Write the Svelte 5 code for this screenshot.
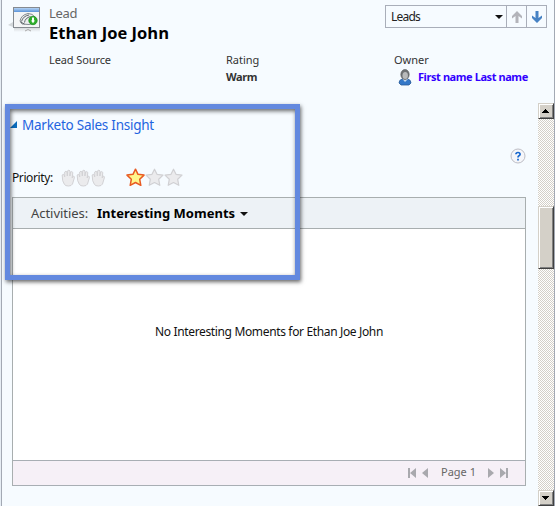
<script>
  const hands = [0, 1, 2];
  const stars = [true, false, false];
</script>

<div class="page">
  <header>
    <svg class="lead-icon" width="34" height="28" viewBox="0 0 34 28">
      <defs>
        <linearGradient id="bar" x2="0" y2="1"><stop stop-color="#b4d3f5" /><stop offset="1" stop-color="#5b93d8" /></linearGradient>
        <linearGradient id="reflection" x2="0" y2="1"><stop stop-color="#aaa" stop-opacity=".5" /><stop offset="1" stop-color="#aaa" stop-opacity="0" /></linearGradient>
      </defs>
      <path d="M0 20l5-3v5z" fill="#d3d7da" />
      <rect x="6" y="22" width="26" height="5" fill="url(#reflection)" />
      <rect x="5.5" y="2.500" width="26" height="20" fill="#f4f5f6" stroke="#858a90" />
      <rect x="6" y="3" width="25" height="4" fill="url(#bar)" />
      <path d="M12 16Q13 10 20 8.500Q24 8 28 13L27 18 21 19.500 14 19Z" fill="#eceeef" stroke="#858b90" />
      <path d="M13.500 16.500Q15 11 21 10M16.500 17.500Q17 13 22.500 11.500M12.500 17l4 2" fill="none" stroke="#62686d" stroke-width="1" />
      <path d="M17 26q3-3 6 0" fill="none" stroke="#aaa" />
      <circle cx="25" cy="15.500" r="4.200" fill="#2fae2b" stroke="#168b18" stroke-width=".7" />
      <path d="M24 12.500h2v3h1L25 18.300 23 15.500H24z" fill="#fff" />
    </svg>
    <div class="title">
      <div class="kind">Lead</div>
      <div class="name">Ethan Joe John</div>
    </div>
    <div class="nav">
      <div class="select"><span>Leads</span><i class="caret"></i></div>
      <div class="arrow"><svg width="10" height="12" viewBox="0 0 10 12"><path d="M5 0l5 5v2.500L6.500 5v7h-3V5L0 7.500V5z" fill="#b3b4ba" /></svg></div>
      <div class="arrow"><svg width="10" height="12" viewBox="0 0 10 12"><path d="M5 12L0 7V4.500L3.500 7V0h3v7L10 4.500V7z" fill="#4682c4" /></svg></div>
    </div>
  </header>

  <div class="fields">
    <div class="f1"><div class="lab src">Lead Source</div></div>
    <div class="f2"><div class="lab">Rating</div><div class="val">Warm</div></div>
    <div class="f3">
      <div class="lab">Owner</div>
      <div class="owner">
        <svg width="14" height="17" viewBox="0 0 14 17">
          <path d="M1 14q0-3 3-4h6q3 1 3 4l-2 2H3z" fill="#3478c8" stroke="#285b98" stroke-width=".8" />
          <path d="M4.500 10L7 13l3-3" fill="#c9dced" />
          <ellipse cx="7" cy="5.500" rx="4.200" ry="5" fill="#6f7274" stroke="#56595b" stroke-width=".6" />
          <ellipse cx="7.200" cy="6.500" rx="2.700" ry="3.500" fill="#b8babb" />
        </svg>
        <span>First name Last name</span>
      </div>
    </div>
  </div>

  <div class="lower">
    <main>
      <div class="section"><svg width="7" height="7" viewBox="0 0 7 7"><path d="M7 0v7H0z" fill="#0b6cbc" /></svg><span>Marketo Sales Insight</span></div>
      <div class="help">
        <svg width="16" height="16" viewBox="0 0 16 16"><circle cx="8" cy="8" r="7" fill="#f5f6fa" stroke="#bdbdc5" /><path d="M5.900 6.300Q6 4.500 8 4.500T10.100 6.200Q10.100 7.200 9 7.800Q8 8.400 8 9.500M8 10.700v1.700" fill="none" stroke="#1767ce" stroke-width="1.700" /></svg>
      </div>
      <div class="priority">
        <span>Priority:</span>
        <div class="hands">
          {#each hands as h (h)}
            <svg width="15" height="18" viewBox="0 0 15 18"><path d="M3.500 15.500Q1 12.500 1.200 6Q2.200 4.500 3.200 6L3.700 8 3.700 3Q5 1.500 6 3L6.300 7 6.700 1.700Q8 .5 9 2L8.900 7 9.600 3Q11 2 11.800 3.500L11.200 9 12.200 7Q13.700 7 13.300 9L11.500 15Q10.500 17 7.500 17T3.500 15.500Z" fill="#ebebed" stroke="#d2d2d5" /></svg>
          {/each}
        </div>
        <div class="stars">
          {#each stars as on, i (i)}
            <svg width="19" height="19" viewBox="0 0 19 19"><path d="M9.500 1.200L12 6.300 18 7.100 13.700 11.300 14.800 17.300 9.500 14.500 4.200 17.300 5.300 11.300 1 7.100 7 6.300Z" fill={on ? '#fff68c' : '#ebebed'} stroke={on ? '#e85a22' : '#d0d0d3'} stroke-width={on ? 1.500 : 1.200} stroke-linejoin="round" /></svg>
          {/each}
        </div>
      </div>
      <section class="panel">
        <div class="panel-head"><span class="act">Activities:</span><b>Interesting Moments</b><i class="caret"></i></div>
        <div class="panel-body"><span>No Interesting Moments for Ethan Joe John</span></div>
        <footer>
          <svg class="first" width="9" height="10" viewBox="0 0 9 10"><path d="M0 0h2v10H0zM8 0v10L2 5z" fill="#a9a9ae" /></svg>
          <svg class="prev" width="6" height="10" viewBox="0 0 6 10"><path d="M6 0v10L0 5z" fill="#a9a9ae" /></svg>
          <span>Page 1</span>
          <svg class="next" width="6" height="10" viewBox="0 0 6 10"><path d="M0 0v10l6-5z" fill="#a9a9ae" /></svg>
          <svg class="last" width="9" height="10" viewBox="0 0 9 10"><path d="M0 0v10l6-5zM6 0h2v10H6z" fill="#a9a9ae" /></svg>
        </footer>
      </section>
    </main>
    <div class="scroll">
      <div class="btn"><svg width="8" height="4" viewBox="0 0 8 4" shape-rendering="crispEdges"><path d="M3 0h1v1h1v1h1v1h1v1H0V3h1V2h1V1h1z" /></svg></div>
      <div class="thumb"></div>
      <div class="btn end"><svg width="8" height="4" viewBox="0 0 8 4" shape-rendering="crispEdges"><path d="M0 0h7v1H6v1H5v1H4v1H3V3H2V2H1V1H0z" /></svg></div>
    </div>
  </div>
  <div class="highlight"></div>
</div>

<style>
  :global(body) { background: #f6fbff; }
  * { box-sizing: border-box; }
  svg { display: block; flex: none; }
  .page { position: relative; width: 555px; height: 506px; overflow: hidden; background: #f6fbff; border-left: 1px solid #e6edf4; border-right: 1px solid #a3a9b4; box-shadow: inset 1px 0 #a3a9b4; font: 12px/16px "Noto Sans", "Open Sans", sans-serif; color: #333; white-space: nowrap; display: flex; flex-direction: column; }
  header { height: 51px; display: flex; flex: none; }
  .lead-icon { margin: 5px 0 0 7px; }
  .title { margin-left: 7px; width: 336px; }
  .kind { font-size: 13px; line-height: 18px; margin-top: 4px; color: #666; letter-spacing: -.3px; }
  .name { font: bold 16.500px/20px "Open Sans", sans-serif; color: #000; letter-spacing: .05px; margin-top: 1px; }
  .nav { display: flex; margin-top: 5px; height: 23px; border: 1px solid #a9aeb9; }
  .select { width: 120px; display: flex; align-items: center; justify-content: space-between; padding: 0 3px 0 5px; color: #222; letter-spacing: -.8px; font-size: 12px; }
  .caret { width: 0; height: 0; border: 4px solid transparent; border-top-color: #111; border-bottom: 0; }
  .select .caret { margin-top: 1px; }
  .arrow { width: 20px; border-left: 1px solid #a9aeb9; display: flex; align-items: center; justify-content: center; }
  .fields { height: 52px; flex: none; display: flex; font-size: 11px; }
  .f1 { margin-left: 48px; width: 177px; }
  .f2 { width: 168px; }
  .lab { line-height: 17px; }
  .src { letter-spacing: -.1px; }
  .val { font-weight: bold; line-height: 17px; letter-spacing: -.4px; }
  .owner { display: flex; margin-left: 4px; font-weight: bold; color: #3200ff; line-height: 17px; letter-spacing: -.42px; }
  .owner svg { margin-top: 1px; }
  .owner span { margin-left: 6px; }
  .lower { display: flex; height: 403px; }
  main { width: 514px; margin-left: 11px; margin-right: 12px; flex: none; }
  .section { height: 44px; padding-top: 13px; display: flex; font-size: 13.500px; line-height: 18px; color: #1e64e0; margin-left: -2px; letter-spacing: -.25px; }
  .section svg { margin-top: 5px; }
  .section span { margin-left: 5px; }
  .help { height: 17px; display: flex; justify-content: flex-end; padding-top: 1px; }
  .priority { height: 33px; display: flex; color: #111; letter-spacing: -.4px; }
  .priority > span { width: 49px; padding-top: 6px; }
  .hands { display: flex; padding-top: 5px; }
  .stars { display: flex; margin-left: 20px; padding-top: 4px; }
  .panel { height: 289px; border: 1px solid #a8aeaf; background: #fff; display: flex; flex-direction: column; }
  .panel-head { height: 31px; border-bottom: 1px solid #a8aeaf; background: #edf2f6; display: flex; align-items: center; padding: 0 0 1px 18px; font-size: 13px; color: #444; }
  .act { width: 66px; letter-spacing: -.05px; }
  .panel-head b { color: #000; letter-spacing: .02px; width: 143px; }
  .panel-head .caret { margin-top: 3px; }
  .panel-body { flex: 1; padding: 95px 0 0 142px; color: #111; letter-spacing: -.35px; }
  footer { height: 26px; flex: none; margin-bottom: -1px; border-top: 1px solid #a8aeb4; border-bottom: 1px solid #a8aeb4; background: #f6f0f7; display: flex; align-items: center; padding-left: 395px; font-size: 11px; color: #666; }
  .prev { margin-left: 5px; }
  footer span { margin-left: 13px; width: 47px; line-height: 16px; padding-bottom: 2px; height: 18px; }
  .last { margin-left: 6px; }
  .scroll { width: 16px; background: conic-gradient(#d4d0c8 25%, #fff 0 50%, #d4d0c8 0 75%, #fff 0) 0 0 / 2px 2px; display: flex; flex-direction: column; }
  .btn, .thumb { background: #d4d0c8; border: 1px solid; border-color: #d4d0c8 #404040 #404040 #d4d0c8; box-shadow: inset 1px 1px #fff, inset -1px -1px #808080; flex: none; }
  .btn { height: 16px; display: flex; align-items: center; justify-content: center; }
  .thumb { height: 63px; margin-top: 87px; }
  .end { margin-top: auto; }
  .highlight { position: absolute; left: 4px; top: 104px; width: 295px; height: 176px; border: 5px solid #6389df; box-shadow: 1px 2px 4px rgba(0,0,0,.6), inset 1px 2px 4px rgba(0,0,0,.6); }
</style>
